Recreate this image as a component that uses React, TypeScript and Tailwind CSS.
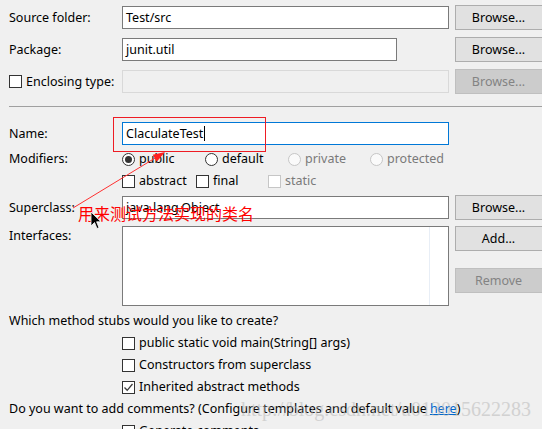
import React from "react";

function Field({ children, w = "w-[327px]", focused = false, disabled = false }: { children?: React.ReactNode; w?: string; focused?: boolean; disabled?: boolean }) {
  const border = focused ? "border-[#0078d7]" : disabled ? "border-[#d9d9d9]" : "border-[#7a7a7a]";
  const bg = disabled ? "bg-[#f0f0f0]" : "bg-white";
  return (
    <div className={`${w} shrink-0 h-[23px] border ${border} ${bg} flex items-center pl-[3px] whitespace-nowrap overflow-hidden`}>
      {children}
    </div>
  );
}

function Button({ label, disabled = false }: { label: string; disabled?: boolean }) {
  return (
    <div
      className={`ml-[6px] w-[90px] shrink-0 h-[25px] border flex items-center justify-center pr-[3px] ${
        disabled ? "bg-[#cccccc] border-[#bfbfbf] text-[#838383]" : "bg-[#e1e1e1] border-[#adadad] text-black"
      }`}
    >
      {label}
    </div>
  );
}

function Check({ checked = false, disabled = false }: { checked?: boolean; disabled?: boolean }) {
  return (
    <span
      className={`w-[13px] h-[13px] shrink-0 border bg-white flex items-center justify-center ${
        disabled ? "border-[#c6c6c6]" : "border-[#333333]"
      }`}
    >
      {checked && (
        <svg width="11" height="11" viewBox="0 0 11 11">
          <path d="M1.5 5.5 L4.2 8.3 L9.5 2" fill="none" stroke="#3c3c3c" strokeWidth="1.3" />
        </svg>
      )}
    </span>
  );
}

function Radio({ checked = false, disabled = false }: { checked?: boolean; disabled?: boolean }) {
  return (
    <span
      className={`w-[13px] h-[13px] shrink-0 rounded-full border flex items-center justify-center ${
        disabled ? "border-[#c6c6c6] bg-[#fafafa]" : "border-[#333333] bg-white"
      }`}
    >
      {checked && <span className="w-[7px] h-[7px] rounded-full bg-[#333333]" />}
    </span>
  );
}

function Option({ kind, label, checked, disabled, w }: { kind: "radio" | "check"; label: string; checked?: boolean; disabled?: boolean; w: string }) {
  return (
    <div className={`${w} shrink-0 flex items-center gap-[4px] whitespace-nowrap ${disabled ? "text-[#7a7a7a]" : "text-black"}`}>
      {kind === "radio" ? <Radio checked={checked} disabled={disabled} /> : <Check checked={checked} disabled={disabled} />}
      <span>{label}</span>
    </div>
  );
}

export default function App() {
  return (
    <div
      className="relative w-[542px] h-[429px] overflow-hidden bg-[#f0f0f0] text-[12.5px] leading-[18px] text-black"
      style={{ fontFamily: '"Noto Sans", "Noto Sans CJK SC", sans-serif' }}
    >
      {/* top section */}
      <div className="mt-[5px] h-[25px] flex items-center">
        <div className="w-[122px] shrink-0 pl-[9px]">Source folder:</div>
        <Field>Test/src</Field>
        <Button label="Browse..." />
      </div>
      <div className="mt-[7px] h-[25px] flex items-center">
        <div className="w-[122px] shrink-0 pl-[9px]">Package:</div>
        <Field w="w-[275px]">junit.util</Field>
        <div className="w-[52px] shrink-0" />
        <Button label="Browse..." />
      </div>
      <div className="mt-[7px] h-[25px] flex items-center">
        <div className="w-[122px] shrink-0 pl-[9px] flex items-center gap-[4px]">
          <Check />
          <span>Enclosing type:</span>
        </div>
        <Field disabled />
        <Button label="Browse..." disabled />
      </div>

      <div className="mt-[12px] ml-[9px] border-t border-[#a0a0a0]" />

      {/* class section */}
      <div className="mt-[15px] h-[23px] flex items-center">
        <div className="w-[122px] shrink-0 pl-[9px]">Name:</div>
        <Field focused>
          <span>ClaculateTest</span>
          <span className="ml-[1px] w-[1px] h-[15px] bg-black" />
        </Field>
      </div>
      <div className="mt-[5px] h-[18px] flex items-center">
        <div className="w-[122px] shrink-0 pl-[9px]">Modifiers:</div>
        <Option kind="radio" label="public" checked w="w-[83px]" />
        <Option kind="radio" label="default" w="w-[83px]" />
        <Option kind="radio" label="private" disabled w="w-[82px]" />
        <Option kind="radio" label="protected" disabled w="w-[90px]" />
      </div>
      <div className="mt-[4px] h-[18px] flex items-center">
        <div className="w-[122px] shrink-0" />
        <Option kind="check" label="abstract" w="w-[74px]" />
        <Option kind="check" label="final" w="w-[72px]" />
        <Option kind="check" label="static" disabled w="w-[60px]" />
      </div>
      <div className="mt-[6px] h-[23px] flex items-center">
        <div className="w-[122px] shrink-0 pl-[9px]">Superclass:</div>
        <Field>java.lang.Object</Field>
        <Button label="Browse..." />
      </div>
      <div className="mt-[7px] h-[80px] flex items-start">
        <div className="w-[122px] shrink-0 pl-[9px] pt-[1px]">Interfaces:</div>
        <div className="w-[327px] shrink-0 h-[80px] border border-[#7a7a7a] bg-white flex justify-end">
          <div className="mr-[18px] w-[1px] h-full bg-[#e8eef6]" />
        </div>
        <div className="flex flex-col gap-[17px]">
          <Button label="Add..." />
          <Button label="Remove" disabled />
        </div>
      </div>

      {/* stubs */}
      <div className="mt-[6px] h-[18px] pl-[9px] flex items-center">Which method stubs would you like to create?</div>
      <div className="mt-[2px] h-[22px] pl-[122px] flex items-center">
        <Option kind="check" label="public static void main(String[] args)" w="w-[300px]" />
      </div>
      <div className="h-[22px] pl-[122px] flex items-center">
        <Option kind="check" label="Constructors from superclass" w="w-[300px]" />
      </div>
      <div className="h-[22px] pl-[122px] flex items-center">
        <Option kind="check" label="Inherited abstract methods" checked w="w-[300px]" />
      </div>
      <div className="h-[22px] pl-[9px] flex items-center whitespace-nowrap">
        Do you want to add comments? (Configure templates and default value{" "}
        <span className="ml-[3px] text-[#0066cc] underline">here</span>)
      </div>
      <div className="h-[22px] pl-[122px] flex items-center">
        <Option kind="check" label="Generate comments" w="w-[300px]" />
      </div>

      {/* watermark */}
      <div
        className="absolute right-[11px] top-[397px] text-[20px] leading-[24px] text-[#b4b4b4] opacity-50 whitespace-nowrap pointer-events-none"
        style={{ fontFamily: '"Liberation Serif", serif' }}
      >
        http://blog.csdn.net/u013015622283
      </div>

      {/* annotation */}
      <div className="absolute left-[113px] top-[117px] w-[153px] h-[35px] border-[1.5px] border-[#ee1c24] pointer-events-none" />
      <svg className="absolute left-0 top-0 pointer-events-none" width="542" height="429">
        <line x1="73" y1="208" x2="156" y2="157.5" stroke="#ff3030" strokeWidth="1" />
        <polygon points="165,152 156.8,161.7 152.7,154.8" fill="#ff2020" />
      </svg>
      <div
        className="absolute left-[78px] top-[204px] text-[16px] leading-[18px] text-[#ff0000] whitespace-nowrap"
        style={{ fontFamily: '"Noto Sans CJK SC", sans-serif' }}
      >
        用来测试方法实现的类名
      </div>
      <svg className="absolute left-[90px] top-[211px]" width="12" height="19" viewBox="0 0 12 19">
        <path d="M1 1 L1 15 L4.5 11.5 L7 17.5 L9 16.7 L6.6 10.8 L11 10.8 Z" fill="#000" stroke="#fff" strokeWidth="0.8" />
      </svg>
    </div>
  );
}
